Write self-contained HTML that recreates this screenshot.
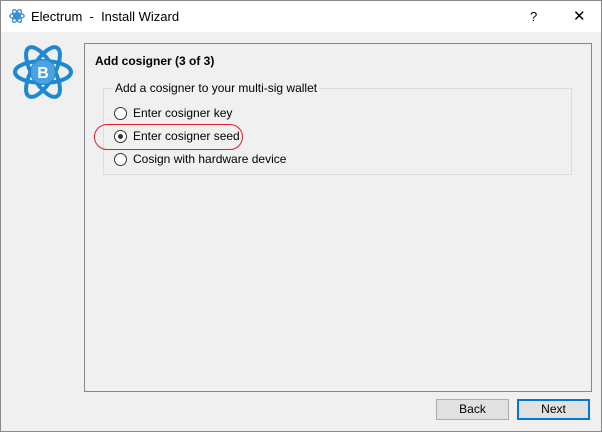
<!DOCTYPE html>
<html><head><meta charset="utf-8"><style>
*{margin:0;padding:0;box-sizing:border-box}
body{width:602px;height:432px;background:#f0f0f0;font-family:"Liberation Sans",sans-serif;font-size:12px;color:#000;position:relative;overflow:hidden;border:1px solid #888}
.title{position:absolute;left:0;top:0;width:600px;height:31px;background:#fff}
.title .t{position:absolute;left:30px;top:8px;font-size:13px}
.q{position:absolute;left:529px;top:8px;font-size:13px}
.x{position:absolute;left:572px;top:6px;font-size:15px}
.panel{position:absolute;left:83px;top:42px;width:508px;height:349px;border:1px solid #828790;background:#f0f0f0}
.h{position:absolute;left:10px;top:10px;font-weight:bold;font-size:12px}
.grp{position:absolute;left:18px;top:44px;width:469px;height:87px;border:1px solid #dcdcdc}
.gl{position:absolute;left:9px;top:-8px;background:#f0f0f0;padding:0 2px}
.r{position:absolute;left:10px;display:flex;align-items:center}
.r i{display:inline-block;width:13px;height:13px;border:1px solid #333;border-radius:50%;background:#fff;margin-right:6px;position:relative}
.r i.on::after{content:"";position:absolute;left:3px;top:3px;width:5px;height:5px;border-radius:50%;background:#333}
.oval{position:absolute;left:93px;top:123px;width:149px;height:26px;border:1.5px solid #e0202a;border-radius:13px}
.btn{position:absolute;top:398px;width:73px;height:21px;background:#e1e1e1;border:1px solid #adadad;text-align:center;line-height:19px}
</style></head><body>
<div class="title">
<svg style="position:absolute;left:8px;top:7px" width="16" height="16" viewBox="0 0 16 16"><g fill="none" stroke="#3a8fd0" stroke-width="1.3"><ellipse cx="8" cy="8" rx="7.2" ry="2.8"/><ellipse cx="8" cy="8" rx="7.2" ry="2.8" transform="rotate(60 8 8)"/><ellipse cx="8" cy="8" rx="7.2" ry="2.8" transform="rotate(-60 8 8)"/></g><circle cx="8" cy="8" r="3" fill="#3a8fd0"/></svg>
<div class="t">Electrum &nbsp;- &nbsp;Install Wizard</div>
<div class="q">?</div><div class="x">✕</div>
</div>
<svg style="position:absolute;left:11px;top:42px" width="62" height="58" viewBox="0 0 62 58"><g fill="none" stroke="#1e88d0" stroke-width="4"><ellipse cx="31" cy="29" rx="28" ry="11"/><ellipse cx="31" cy="29" rx="28" ry="11" transform="rotate(60 31 29)"/><ellipse cx="31" cy="29" rx="28" ry="11" transform="rotate(-60 31 29)"/></g><circle cx="31" cy="29" r="12" fill="#4aa3e0"/><text x="31" y="35" text-anchor="middle" font-family="Liberation Sans" font-weight="bold" font-size="16" fill="#fff">B</text></svg>
<div class="panel">
<div class="h">Add cosigner (3 of 3)</div>
<div class="grp"><span class="gl">Add a cosigner to your multi-sig wallet</span>
<div class="r" style="top:17px"><i></i>Enter cosigner key</div>
<div class="r" style="top:40px"><i class="on"></i>Enter cosigner seed</div>
<div class="r" style="top:63px"><i></i>Cosign with hardware device</div>
</div>
</div>
<div class="oval"></div>
<div class="btn" style="left:435px">Back</div>
<div class="btn" style="left:516px;border:2px solid #0078d7;line-height:17px">Next</div>
</body></html>
